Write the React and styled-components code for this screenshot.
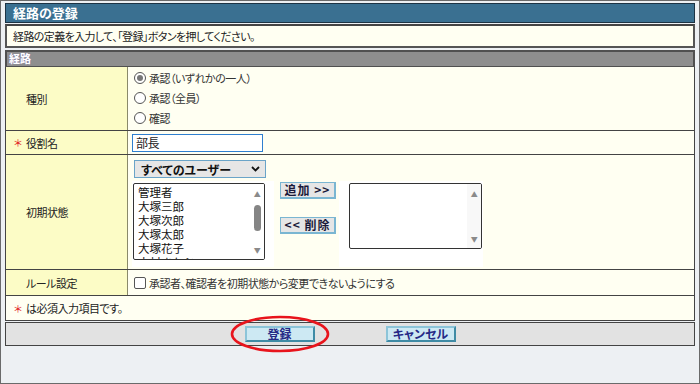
import styled, { createGlobalStyle } from "styled-components";

const Global = createGlobalStyle`
  html, body { margin: 0; padding: 0; background: #fff; }
  body {
    font-family: "Noto Sans CJK JP", "Noto Sans", sans-serif;
    font-feature-settings: "palt";
    color: #222;
  }
`;

export default function App() {
  return (
    <Page>
      <Global />
      <TitleBar>経路の登録</TitleBar>
      <Desc>経路の定義を入力して、「登録」ボタンを押してください。</Desc>
      <SectionHead>経路</SectionHead>
      <Table>
        <Row $h={64}>
          <Label>種別</Label>
          <Value $col $pt={1}>
            <Choice>
              <Radio $on />
              承認（いずれかの一人）
            </Choice>
            <Choice>
              <Radio />
              承認（全員）
            </Choice>
            <Choice>
              <Radio />
              確認
            </Choice>
          </Value>
        </Row>
        <Row $h={24}>
          <Label>
            <Req>＊</Req>役割名
          </Label>
          <Value $pt={3}>
            <TextBox>部長</TextBox>
          </Value>
        </Row>
        <Row $h={115}>
          <Label>初期状態</Label>
          <Value $col $pt={5}>
            <Select>
              すべてのユーザー
              <svg width="9" height="6" viewBox="0 0 9 6">
                <path d="M1 1 L4.5 4.5 L8 1" fill="none" stroke="#111" strokeWidth="1.8" />
              </svg>
            </Select>
            <Picker>
              <WhiteCell $l={1} $r={9}>
                <ListBox $w={132} $h={77}>
                  <Items>
                    <li>管理者</li>
                    <li>大塚三郎</li>
                    <li>大塚次郎</li>
                    <li>大塚太郎</li>
                    <li>大塚花子</li>
                    <li>大村まなぶ</li>
                  </Items>
                  <Scroll>
                    <Arrow>▲</Arrow>
                    <Thumb />
                    <Arrow>▼</Arrow>
                  </Scroll>
                </ListBox>
              </WhiteCell>
              <Moves>
                <MoveBtn>追加 &gt;&gt;</MoveBtn>
                <MoveBtn>&lt;&lt; 削除</MoveBtn>
              </Moves>
              <WhiteCell $l={10} $r={1}>
                <ListBox $w={133} $h={66}>
                  <Items />
                  <Scroll $pale>
                    <Arrow>▲</Arrow>
                    <Arrow>▼</Arrow>
                  </Scroll>
                </ListBox>
              </WhiteCell>
            </Picker>
          </Value>
        </Row>
        <Row $h={26}>
          <Label>ルール設定</Label>
          <Value $pt={3}>
            <Choice>
              <Check />
              承認者、確認者を初期状態から変更できないようにする
            </Choice>
          </Value>
        </Row>
        <Note>
          <Req>＊</Req>は必須入力項目です。
        </Note>
      </Table>
      <ButtonBar>
        <Marked>
          <FormBtn>登録</FormBtn>
          <Ring width="100" height="38" viewBox="0 0 100 38">
            <ellipse cx="50" cy="19" rx="48" ry="17" fill="none" stroke="#e8141c" strokeWidth="2.6" />
          </Ring>
        </Marked>
        <FormBtn>キャンセル</FormBtn>
      </ButtonBar>
    </Page>
  );
}

const Page = styled.div`
  box-sizing: border-box;
  width: 700px;
  height: 384px;
  border: 1px solid #6a6a6a;
  background: #edf0f3;
  padding: 2px 4px;
  display: flex;
  flex-direction: column;
  letter-spacing: -0.5px;
`;

const TitleBar = styled.div`
  box-sizing: border-box;
  height: 20px;
  background: #3a7091;
  border: 1px solid #1c3344;
  color: #fff;
  font-weight: 700;
  font-size: 13px;
  line-height: 18px;
  padding-left: 7px;
  letter-spacing: 0;
`;

const Desc = styled.div`
  box-sizing: border-box;
  margin-top: 1px;
  height: 24px;
  background: #fffff2;
  border: 2px solid #555;
  border-top-color: #444;
  font-size: 11px;
  line-height: 20px;
  padding-left: 6px;
  letter-spacing: -0.6px;
`;

const SectionHead = styled.div`
  box-sizing: border-box;
  margin-top: 2px;
  height: 17px;
  background: #8e8e8e;
  border: 2px solid #505050;
  border-bottom: 1px solid #505050;
  color: #fff;
  font-weight: 700;
  font-size: 11px;
  line-height: 13px;
  padding-left: 2px;
  letter-spacing: 0;
  text-shadow: 0 0 1px #8a7fc0;
`;

const Table = styled.div`
  border: 1px solid #444;
  border-top: none;
  background: #fffff2;
`;

const Row = styled.div`
  box-sizing: border-box;
  display: grid;
  grid-template-columns: 122px 1fr;
  height: ${(p) => p.$h}px;
  border-bottom: 1px solid #444;
`;

const Label = styled.div`
  background: #fcfcc6;
  border-right: 1px solid #8a8a6a;
  display: flex;
  align-items: center;
  padding-left: 20px;
  font-size: 11px;
  color: #222;
`;

const Value = styled.div`
  display: flex;
  flex-direction: ${(p) => (p.$col ? "column" : "row")};
  align-items: flex-start;
  padding: ${(p) => p.$pt}px 4px 0;
  font-size: 11px;
  overflow: hidden;
`;

const Req = styled.span`
  color: #e0181c;
  display: inline-block;
  width: 12px;
  margin-left: -12px;
  font-size: 10px;
`;

const Choice = styled.label`
  display: flex;
  align-items: center;
  height: 20px;
  gap: 3px;
  margin-left: 2px;
  font-size: 11px;
  color: #333;
`;

const Radio = styled.span`
  box-sizing: border-box;
  width: 12px;
  height: 12px;
  border-radius: 50%;
  border: 1px solid #555;
  background: #fff;
  display: inline-block;
  position: relative;
  &::after {
    content: "";
    display: ${(p) => (p.$on ? "block" : "none")};
    position: absolute;
    left: 2px;
    top: 2px;
    width: 6px;
    height: 6px;
    border-radius: 50%;
    background: #777;
  }
`;

const Check = styled.span`
  box-sizing: border-box;
  width: 12px;
  height: 12px;
  border: 1px solid #555;
  border-radius: 2px;
  background: #fff;
  display: inline-block;
`;

const TextBox = styled.div`
  box-sizing: border-box;
  width: 131px;
  height: 18px;
  border: 1px solid #2f7fcf;
  background: #fff;
  font-size: 12px;
  line-height: 16px;
  padding-left: 3px;
`;

const Select = styled.div`
  box-sizing: border-box;
  margin-left: 2px;
  width: 132px;
  height: 18px;
  border: 1px solid #6aa4c8;
  background: #e6e6e6;
  display: flex;
  align-items: center;
  justify-content: space-between;
  padding: 0 5px 0 6px;
  font-weight: 700;
  font-size: 12px;
  letter-spacing: 0;
  color: #111;
`;

const Picker = styled.div`
  display: flex;
  align-items: flex-start;
  margin-top: 3px;
`;

const WhiteCell = styled.div`
  background: #fff;
  padding: 2px ${(p) => p.$r}px 7px ${(p) => p.$l}px;
  min-height: 77px;
`;

const ListBox = styled.div`
  box-sizing: border-box;
  width: ${(p) => p.$w}px;
  height: ${(p) => p.$h}px;
  border: 1px solid #333;
  border-radius: 2px;
  background: #fff;
  display: flex;
  overflow: hidden;
`;

const Items = styled.ul`
  flex: 1;
  margin: 0;
  padding: 1px 4px 0;
  list-style: none;
  font-size: 11.5px;
  line-height: 14px;
  letter-spacing: 0;
  color: #111;
`;

const Scroll = styled.div`
  width: 14px;
  background: ${(p) => (p.$pale ? "#f8f8f8" : "#fff")};
  display: flex;
  flex-direction: column;
  align-items: center;
  justify-content: space-between;
  padding: 6px 0 5px;
`;

const Arrow = styled.span`
  font-size: 7px;
  line-height: 8px;
  color: #8a8a8a;
`;

const Thumb = styled.span`
  width: 7px;
  height: 26px;
  border-radius: 4px;
  background: #858585;
  margin: -14px 0 -6px;
`;

const Moves = styled.div`
  display: flex;
  flex-direction: column;
  gap: 18px;
  padding: 1px 3px 0 6px;
  background: #fffff2;
`;

const MoveBtn = styled.div`
  box-sizing: border-box;
  width: 56px;
  height: 17px;
  background: #e6e6e6;
  border: 1px solid #7ab6d2;
  border-right-width: 2px;
  border-bottom-width: 2px;
  font-weight: 700;
  font-size: 12px;
  line-height: 14px;
  text-align: center;
  letter-spacing: 1px;
  color: #1a1a3a;
  white-space: pre;
`;

const Note = styled.div`
  box-sizing: border-box;
  height: 24px;
  display: flex;
  align-items: center;
  padding-left: 8px;
  font-size: 11px;
  & > span {
    margin-left: 0;
  }
`;

const ButtonBar = styled.div`
  box-sizing: border-box;
  margin-top: 1px;
  height: 24px;
  background: #e2e2e2;
  border: 1px solid #444;
  display: flex;
  align-items: center;
  justify-content: center;
  gap: 71px;
`;

const Marked = styled.span`
  position: relative;
  display: inline-flex;
`;

const Ring = styled.svg`
  position: absolute;
  left: -15px;
  top: -11px;
  pointer-events: none;
`;

const FormBtn = styled.div`
  box-sizing: border-box;
  width: 70px;
  height: 16px;
  background: #cde9f3;
  border: 2px solid #3f8ba5;
  border-top-color: #8cc4d8;
  border-left-color: #8cc4d8;
  font-weight: 700;
  font-size: 12px;
  line-height: 12px;
  text-align: center;
  letter-spacing: 0;
  color: #262a86;
`;
